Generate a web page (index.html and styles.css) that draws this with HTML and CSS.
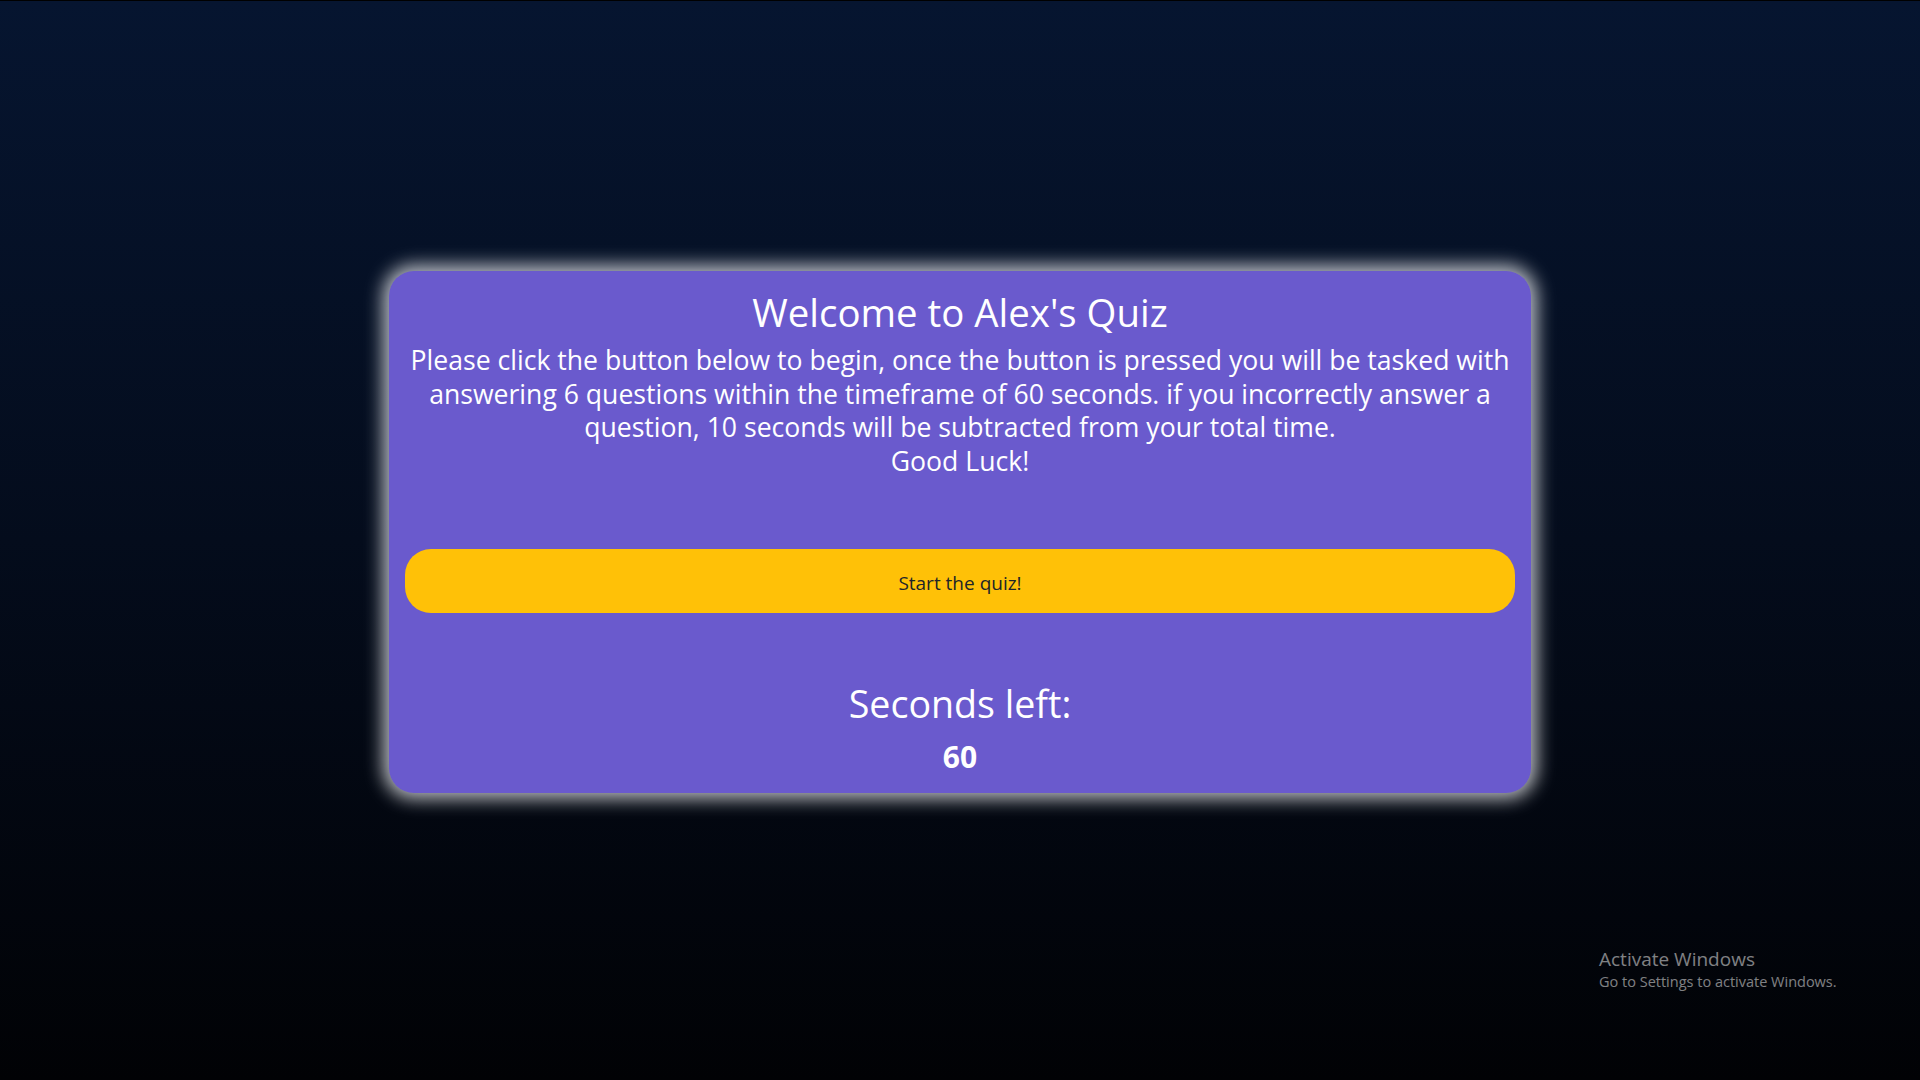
FILE: index.html
```html
<!DOCTYPE html>
<html lang="en">
<head>
<meta charset="utf-8">
<title>Alex's Quiz</title>
<link rel="stylesheet" href="styles.css">
</head>
<body>
<main class="stage">
  <section class="card">
    <h1 class="title">Welcome to Alex's Quiz</h1>
    <p class="intro">Please click the button below to begin, once the button is pressed you will be tasked with answering 6 questions within the timeframe of 60 seconds. if you incorrectly answer a question, 10 seconds will be subtracted from your total time.<br>Good Luck!</p>
    <button class="start-btn" type="button">Start the quiz!</button>
    <h2 class="timer-label">Seconds left:</h2>
    <div class="timer-value">60</div>
  </section>
</main>
<div class="watermark">
  <div class="wm-title">Activate Windows</div>
  <div class="wm-sub">Go to Settings to activate Windows.</div>
</div>
</body>
</html>
```

FILE: styles.css
```css
html, body {
  margin: 0;
  padding: 0;
  height: 100%;
}

body {
  background: linear-gradient(to bottom, #061530 0%, #040c1c 50%, #010205 100%);
  border-top: 1px solid #000;
  box-sizing: border-box;
  font-family: "Open Sans", "Noto Sans", sans-serif;
  color: #fff;
  overflow: hidden;
}

.stage {
  display: flex;
  justify-content: center;
  padding-top: 270px;
}

.card {
  width: 1142px;
  box-sizing: border-box;
  background: #6a5acd;
  border-radius: 25px;
  box-shadow: 0 0 18px 6px rgba(215, 217, 222, 0.85);
  padding: 16px 14px 19px;
  display: flex;
  flex-direction: column;
  align-items: stretch;
  text-align: center;
}

.title {
  margin: 0;
  font-size: 38.4px;
  line-height: 50px;
  font-weight: 400;
}

.intro {
  margin: 7px 0 0;
  font-size: 26.6px;
  line-height: 33.6px;
}

.start-btn {
  margin: 71px 2px 0;
  height: 64px;
  border: none;
  border-radius: 26px;
  background: #ffc107;
  color: #212529;
  font-family: "Open Sans", "Noto Sans", sans-serif;
  font-size: 19px;
  padding: 3px 0 0;
  cursor: pointer;
}

.timer-label {
  margin: 69px 0 0;
  font-size: 37.6px;
  line-height: 44px;
  font-weight: 400;
}

.timer-value {
  margin-top: 14px;
  font-size: 30px;
  line-height: 34px;
  font-weight: 700;
}

.watermark {
  position: absolute;
  left: 1599px;
  top: 947px;
  color: rgba(255, 255, 255, 0.5);
  font-family: "Open Sans", "Noto Sans", sans-serif;
}

.wm-title {
  font-size: 19px;
  line-height: 24px;
}

.wm-sub {
  font-size: 14.5px;
  line-height: 22px;
}
```
